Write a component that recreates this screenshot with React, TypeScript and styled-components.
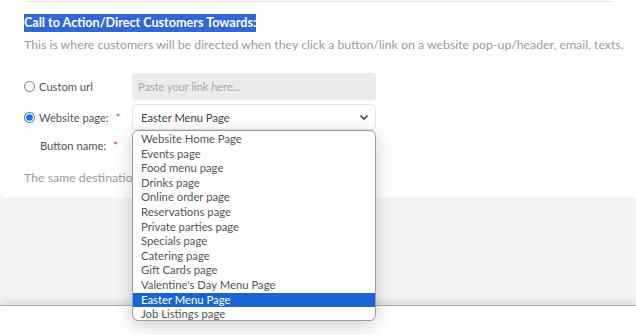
import React from 'react';
import styled, {createGlobalStyle} from 'styled-components';

const Global = createGlobalStyle`
  html, body {
    margin: 0;
    padding: 0;
    background: #f3f4f6;
    font-family: Lato, "Open Sans", sans-serif;
    overflow: hidden;
  }
`;

const Page = styled.div`
  width: 636px;
  height: 335px;
  position: relative;
  background: #f3f4f6;
  overflow: hidden;
`;
const Card = styled.div`
  background: #fff;
  height: 198px;
  border-radius: 0 0 6px 6px;
  padding: 0 24px;
  box-sizing: border-box;
`;
const TopEdge = styled.div`
  height: 1px;
  border-bottom: 1px solid #efdfdf;
  border-bottom-left-radius: 4px;
  margin-left: 2px;
`;
const Heading = styled.div`
  margin-top: 11px;
  height: 20px;
  display: flex;
  align-items: center;
`;
const Highlight = styled.span`
  background: #3367d6;
  color: #fff;
  font-weight: 700;
  font-size: 12.6px;
  line-height: 18px;
`;
const Desc = styled.p`
  margin: 3px 0 0;
  color: #9b9b9b;
  font-size: 12.3px;
  line-height: 18px;
  white-space: nowrap;
`;
const Form = styled.div`
  margin-top: 19px;
  display: grid;
  grid-template-columns: 108px 244px;
  grid-template-rows: 27px 26px 22px;
  row-gap: 4px;
  align-items: center;
`;
const Label = styled.label<{indent?: boolean}>`
  display: flex;
  align-items: center;
  gap: 4px;
  color: #555;
  font-size: 11.2px;
  white-space: nowrap;
  padding-left: ${p => (p.indent ? '16px' : '0')};
`;
const Radio = styled.input`
  margin: 0;
  width: 11px;
  height: 11px;
  accent-color: #1a73e8;
`;
const Req = styled.span`
  color: #e53935;
  margin-left: 3px;
`;
const TextInput = styled.div`
  height: 27px;
  background: #ebebeb;
  border-radius: 4px;
  display: flex;
  align-items: center;
  padding-left: 6px;
  color: #aaa;
  font-size: 11px;
`;
const Select = styled.div`
  height: 26px;
  background: #fff;
  border: 1px solid #e6e6e6;
  border-radius: 4px;
  box-sizing: border-box;
  display: flex;
  align-items: center;
  justify-content: space-between;
  padding: 0 6px 0 8px;
  color: #444;
  font-size: 11.2px;
`;
const Note = styled.p`
  margin: 14px 0 0;
  color: #9b9b9b;
  font-size: 12.3px;
`;
const List = styled.ul`
  position: absolute;
  left: 132px;
  top: 130px;
  width: 244px;
  height: 191px;
  box-sizing: border-box;
  margin: 0;
  padding: 1px 0;
  list-style: none;
  background: #fff;
  border: 1px solid #9d9d9d;
  border-radius: 6px;
  box-shadow: 0 4px 18px rgba(0, 0, 0, 0.2);
  overflow: hidden;
  z-index: 3;
`;
const Option = styled.li<{active?: boolean}>`
  height: 14.6px;
  line-height: 14.6px;
  padding-left: 8px;
  font-size: 11.3px;
  color: ${p => (p.active ? '#fff' : '#555')};
  background: ${p => (p.active ? '#1a65d6' : 'transparent')};
`;
const Footer = styled.div`
  position: absolute;
  left: 0;
  right: 0;
  top: 305px;
  bottom: 0;
  background: #fff;
  border-top: 1px solid #b0b0b0;
  box-shadow: 0 -3px 8px rgba(0, 0, 0, 0.12);
`;

const pages = [
  'Website Home Page',
  'Events page',
  'Food menu page',
  'Drinks page',
  'Online order page',
  'Reservations page',
  'Private parties page',
  'Specials page',
  'Catering page',
  'Gift Cards page',
  "Valentine's Day Menu Page",
  'Easter Menu Page',
  'Job Listings page',
];

function Chevron() {
  return (
    <svg width="10" height="10" viewBox="0 0 10 10">
      <path d="M1.5 3.5 L5 7 L8.5 3.5" fill="none" stroke="#444" strokeWidth="1.6" />
    </svg>
  );
}

export default function App() {
  return (
    <Page>
      <Global />
      <Card>
        <TopEdge />
        <Heading>
          <Highlight>Call to Action/Direct Customers Towards:</Highlight>
        </Heading>
        <Desc>
          This is where customers will be directed when they click a button/link on a website pop-up/header, email, texts.
        </Desc>
        <Form>
          <Label>
            <Radio type="radio" name="dest" readOnly />
            Custom url
          </Label>
          <TextInput>Paste your link here...</TextInput>
          <Label>
            <Radio type="radio" name="dest" checked readOnly />
            Website page:<Req>*</Req>
          </Label>
          <Select>
            Easter Menu Page
            <Chevron />
          </Select>
          <Label indent>
            Button name:<Req>*</Req>
          </Label>
          <div />
        </Form>
        <Note>The same destination</Note>
      </Card>
      <List>
        {pages.map(p => (
          <Option key={p} active={p === 'Easter Menu Page'}>
            {p}
          </Option>
        ))}
      </List>
      <Footer />
    </Page>
  );
}
